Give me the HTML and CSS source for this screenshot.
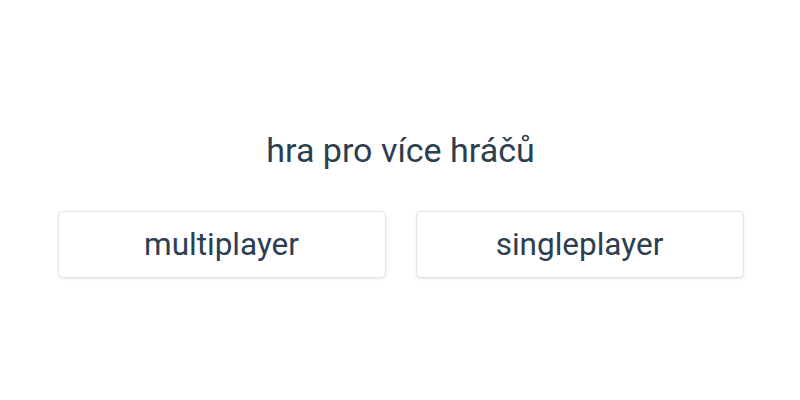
FILE: index.html
```html
<!DOCTYPE html>
<html lang="cs">
<head>
    <meta charset="UTF-8">
    <meta name="viewport" content="width=device-width, initial-scale=1.0">
    <title>hra pro více hráčů</title>
    <link rel="stylesheet" href="styles.css">
</head>
<body>
    <section class="menu">
        <p class="nadpis">hra pro více hráčů</p>
        <div class="volby">
            <button class="volba">multiplayer</button>
            <button class="volba">singleplayer</button>
        </div>
    </section>
</body>
</html>
```

FILE: styles.css
```css
*{
    margin: 0px;
    padding: 0px;
    box-sizing: border-box;
}
body{
    width: 800px;
    height: 400px;
    background-color: #fff;
    font-family: Roboto, 'Noto Sans', sans-serif;
    color: #2c3e50;
}
.menu{
    display: flex;
    flex-direction: column;
    align-items: center;
    padding-top: 130px;
    padding-left: 1px;
}
.nadpis{
    font-size: 34px;
    line-height: 40px;
}
.volby{
    display: flex;
    gap: 30px;
    margin-top: 41px;
}
.volba{
    width: 328px;
    height: 67px;
    background-color: #fff;
    border: 1px solid #e4e4e4;
    border-radius: 5px;
    box-shadow: 0 1px 3px rgba(0,0,0,0.1);
    font-family: Roboto, 'Noto Sans', sans-serif;
    font-size: 31.5px;
    color: #2c3e50;
}
```
